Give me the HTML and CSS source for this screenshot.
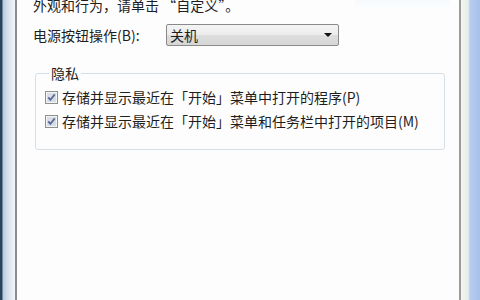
FILE: index.html
```html
<!DOCTYPE html>
<html lang="zh-CN">
  <head>
    <meta charset="UTF-8" />
    <meta name="viewport" content="width=device-width, initial-scale=1.0" />
    <title>开始菜单属性</title>
    <link rel="stylesheet" href="styles.css">
  </head>
  <body>
    <div class="window">
      <div class="frame-left"></div>
      <div class="content">
        <div class="top-row">
          <span class="intro">外观和行为，请单击 “自定义”。</span>
          <div class="preview-edge"></div>
        </div>

        <div class="power-row">
          <label for="powerAction" class="power-label">电源按钮操作(B):</label>
          <div class="combo" id="powerAction">
            <span class="combo-value">关机</span>
            <span class="combo-arrow"></span>
          </div>
        </div>

        <fieldset class="group">
          <legend>隐私</legend>
          <label class="check-row">
            <span class="checkbox">
              <svg width="13" height="13" viewBox="0 0 13 13">
                <rect x="0.5" y="0.5" width="12" height="12" fill="#f4f4f4" stroke="#8e8f8f" />
                <rect x="2" y="2" width="9" height="9" fill="#d9dee6" />
                <path d="M3.2 6.4 L5.4 8.8 L9.8 3.4" fill="none" stroke="#5a6a9c" stroke-width="1.8" />
              </svg>
            </span>
            存储并显示最近在「开始」菜单中打开的程序(P)
          </label>
          <label class="check-row">
            <span class="checkbox">
              <svg width="13" height="13" viewBox="0 0 13 13">
                <rect x="0.5" y="0.5" width="12" height="12" fill="#f4f4f4" stroke="#8e8f8f" />
                <rect x="2" y="2" width="9" height="9" fill="#d9dee6" />
                <path d="M3.2 6.4 L5.4 8.8 L9.8 3.4" fill="none" stroke="#5a6a9c" stroke-width="1.8" />
              </svg>
            </span>
            存储并显示最近在「开始」菜单和任务栏中打开的项目(M)
          </label>
        </fieldset>
      </div>
      <div class="frame-right"></div>
    </div>
  </body>
</html>
```

FILE: styles.css
```css
/* Window frame */
body {
  margin: 0;
  font-family: "Noto Sans CJK SC", "Noto Sans", sans-serif;
  font-size: 14px;
  color: #1e1e1e;
  overflow: hidden;
}
.window {
  display: flex;
  width: 480px;
  height: 300px;
}
.frame-left {
  width: 15px;
  background: linear-gradient(to right, #27465e 0, #27465e 2px, #b9cbdb 3px, #d6e2ec 8px, #eef3f7 14px);
  border-right: 2px solid #8c8c8c;
}
.frame-right {
  width: 19px;
  border-left: 2px solid #9c9c9c;
  background: linear-gradient(to right, #f2f6f0 0, #e6efe6 7px, #b8cdee 9px, #a7c0ea 19px);
}
.content {
  flex: 1;
  background-color: #fdfdfd;
  padding-left: 16px;
}

/* Top text line */
.top-row {
  display: flex;
  align-items: flex-start;
  height: 20px;
  margin-top: -4px;
  line-height: 18px;
}
.intro {
  flex: 1;
}
.preview-edge {
  width: 95px;
  height: 12px;
  margin-right: 9px;
  background: linear-gradient(to bottom, #f3f9fc, #fbfdfe);
}

/* Power button row */
.power-row {
  display: flex;
  align-items: center;
  margin-top: 8px;
  height: 22px;
}
.power-label {
  width: 133px;
}
.combo {
  display: flex;
  align-items: center;
  justify-content: space-between;
  box-sizing: border-box;
  width: 173px;
  height: 22px;
  padding: 0 6px 0 3px;
  border: 1px solid #8a8a8a;
  border-radius: 2px;
  background: linear-gradient(to bottom, #f4f4f4 0%, #ececec 50%, #dedede 51%, #d6d6d6 100%);
  line-height: 20px;
}
.combo-arrow {
  width: 0;
  height: 0;
  border-left: 4px solid transparent;
  border-right: 4px solid transparent;
  border-top: 4px solid #111;
}

/* Privacy group */
.group {
  box-sizing: border-box;
  width: 410px;
  margin: 19px 0 0 2px;
  padding: 4px 0 16px 9px;
  border: 1px solid #d5dfe5;
  border-radius: 3px;
}
.group legend {
  margin-left: 4px;
  padding: 0 2px;
  line-height: 16px;
}
.check-row {
  display: flex;
  align-items: center;
  height: 24px;
  line-height: 24px;
}
.checkbox {
  display: flex;
  width: 13px;
  height: 13px;
  margin-right: 4px;
}
```
